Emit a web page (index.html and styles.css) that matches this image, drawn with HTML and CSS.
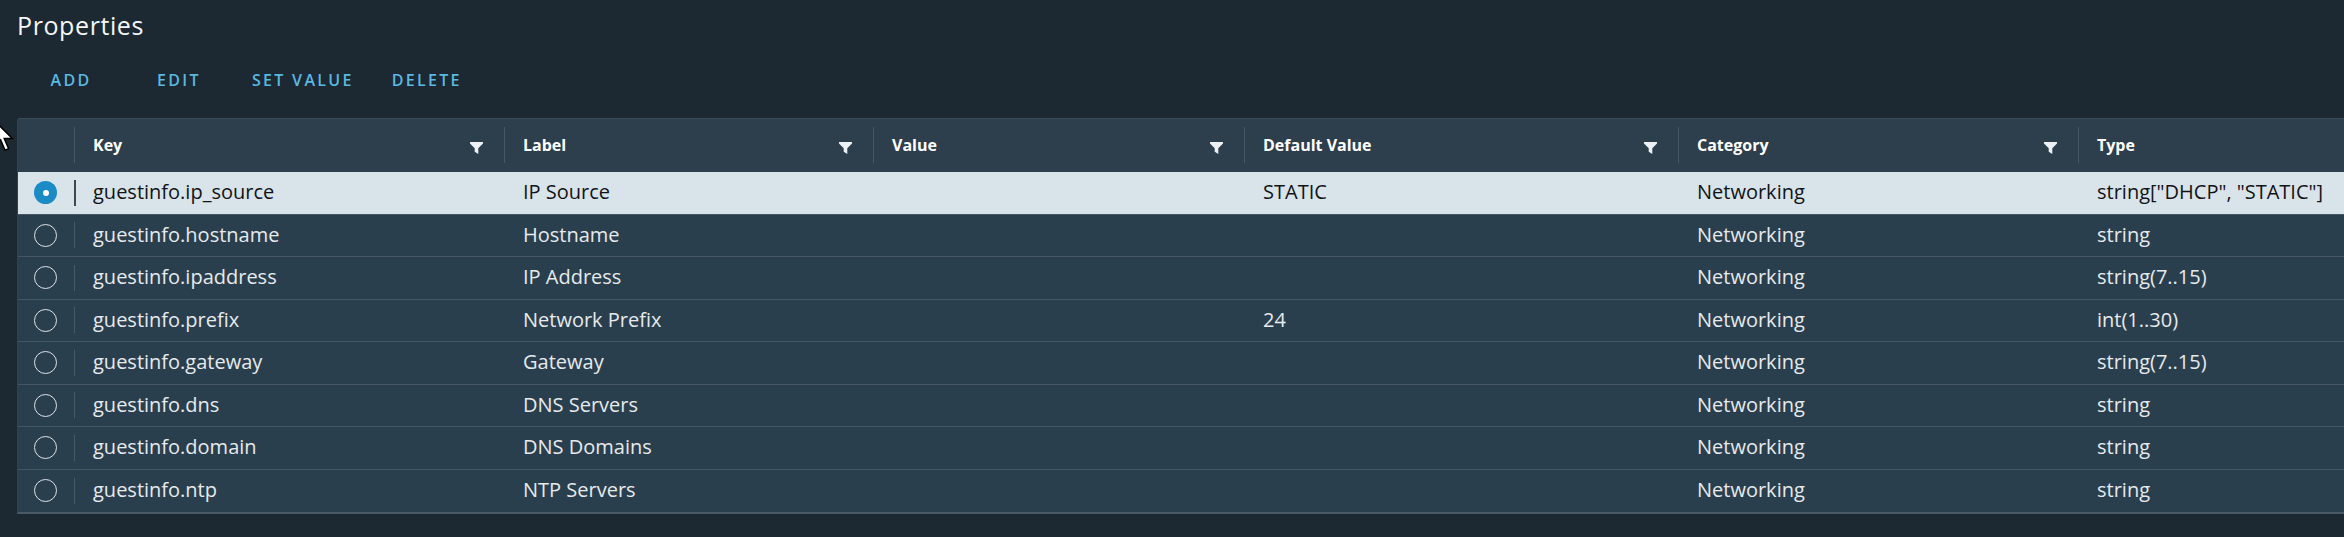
FILE: index.html
```html
<!DOCTYPE html>
<html lang="en">
<head>
  <meta charset="UTF-8">
  <title>Properties</title>
  <link rel="stylesheet" href="styles.css">
</head>
<body>
  <main class="page">
    <h1 class="title">Properties</h1>

    <div class="toolbar">
      <button class="btn-link">ADD</button>
      <button class="btn-link">EDIT</button>
      <button class="btn-link">SET VALUE</button>
      <button class="btn-link">DELETE</button>
    </div>

    <section class="datagrid">
      <div class="dg-row dg-head">
        <div class="dg-cell"></div>
        <div class="dg-cell"><span class="sep"></span><span class="col-title">Key</span><svg class="filter" viewBox="0 0 13 12"><path d="M0 0H13V1.6L8.3 6.3V12L4.7 9.8V6.3L0 1.6Z"/></svg></div>
        <div class="dg-cell"><span class="sep"></span><span class="col-title">Label</span><svg class="filter" viewBox="0 0 13 12"><path d="M0 0H13V1.6L8.3 6.3V12L4.7 9.8V6.3L0 1.6Z"/></svg></div>
        <div class="dg-cell"><span class="sep"></span><span class="col-title">Value</span><svg class="filter" viewBox="0 0 13 12"><path d="M0 0H13V1.6L8.3 6.3V12L4.7 9.8V6.3L0 1.6Z"/></svg></div>
        <div class="dg-cell"><span class="sep"></span><span class="col-title">Default Value</span><svg class="filter" viewBox="0 0 13 12"><path d="M0 0H13V1.6L8.3 6.3V12L4.7 9.8V6.3L0 1.6Z"/></svg></div>
        <div class="dg-cell"><span class="sep"></span><span class="col-title">Category</span><svg class="filter" viewBox="0 0 13 12"><path d="M0 0H13V1.6L8.3 6.3V12L4.7 9.8V6.3L0 1.6Z"/></svg></div>
        <div class="dg-cell"><span class="sep"></span><span class="col-title">Type</span></div>
      </div>

      <div class="dg-row selected">
        <div class="dg-cell radio-cell"><span class="radio checked"></span></div>
        <div class="dg-cell key-cell"><span class="sep"></span>guestinfo.ip_source</div>
        <div class="dg-cell">IP Source</div>
        <div class="dg-cell"></div>
        <div class="dg-cell">STATIC</div>
        <div class="dg-cell">Networking</div>
        <div class="dg-cell">string["DHCP", "STATIC"]</div>
      </div>
      <div class="dg-row">
        <div class="dg-cell radio-cell"><span class="radio"></span></div>
        <div class="dg-cell key-cell"><span class="sep"></span>guestinfo.hostname</div>
        <div class="dg-cell">Hostname</div>
        <div class="dg-cell"></div>
        <div class="dg-cell"></div>
        <div class="dg-cell">Networking</div>
        <div class="dg-cell">string</div>
      </div>
      <div class="dg-row">
        <div class="dg-cell radio-cell"><span class="radio"></span></div>
        <div class="dg-cell key-cell"><span class="sep"></span>guestinfo.ipaddress</div>
        <div class="dg-cell">IP Address</div>
        <div class="dg-cell"></div>
        <div class="dg-cell"></div>
        <div class="dg-cell">Networking</div>
        <div class="dg-cell">string(7..15)</div>
      </div>
      <div class="dg-row">
        <div class="dg-cell radio-cell"><span class="radio"></span></div>
        <div class="dg-cell key-cell"><span class="sep"></span>guestinfo.prefix</div>
        <div class="dg-cell">Network Prefix</div>
        <div class="dg-cell"></div>
        <div class="dg-cell">24</div>
        <div class="dg-cell">Networking</div>
        <div class="dg-cell">int(1..30)</div>
      </div>
      <div class="dg-row">
        <div class="dg-cell radio-cell"><span class="radio"></span></div>
        <div class="dg-cell key-cell"><span class="sep"></span>guestinfo.gateway</div>
        <div class="dg-cell">Gateway</div>
        <div class="dg-cell"></div>
        <div class="dg-cell"></div>
        <div class="dg-cell">Networking</div>
        <div class="dg-cell">string(7..15)</div>
      </div>
      <div class="dg-row">
        <div class="dg-cell radio-cell"><span class="radio"></span></div>
        <div class="dg-cell key-cell"><span class="sep"></span>guestinfo.dns</div>
        <div class="dg-cell">DNS Servers</div>
        <div class="dg-cell"></div>
        <div class="dg-cell"></div>
        <div class="dg-cell">Networking</div>
        <div class="dg-cell">string</div>
      </div>
      <div class="dg-row">
        <div class="dg-cell radio-cell"><span class="radio"></span></div>
        <div class="dg-cell key-cell"><span class="sep"></span>guestinfo.domain</div>
        <div class="dg-cell">DNS Domains</div>
        <div class="dg-cell"></div>
        <div class="dg-cell"></div>
        <div class="dg-cell">Networking</div>
        <div class="dg-cell">string</div>
      </div>
      <div class="dg-row">
        <div class="dg-cell radio-cell"><span class="radio"></span></div>
        <div class="dg-cell key-cell"><span class="sep"></span>guestinfo.ntp</div>
        <div class="dg-cell">NTP Servers</div>
        <div class="dg-cell"></div>
        <div class="dg-cell"></div>
        <div class="dg-cell">Networking</div>
        <div class="dg-cell">string</div>
      </div>
    </section>
  </main>

  <!-- mouse pointer resting on the left edge -->
  <svg class="cursor" viewBox="0 0 13 21"><path d="M0.5 0.5V17.5L4.5 13.5L7.5 20.5L10 19.5L7 12.5H12.5Z"/></svg>
</body>
</html>
```

FILE: styles.css
```css
/* Reset */
* {
  margin: 0;
  padding: 0;
  box-sizing: border-box;
}

/* Global */
body {
  font-family: 'Open Sans', 'Liberation Sans', sans-serif;
  background-color: #1c2832;
  color: #e6eaed;
  overflow: hidden;
  position: relative;
  height: 537px;
}

.page {
  padding-left: 17px;
}

/* Title */
.title {
  font-size: 25px;
  font-weight: 400;
  line-height: 30px;
  letter-spacing: 0.6px;
  color: #f4f6f7;
  padding-top: 10px;
}

/* Toolbar */
.toolbar {
  display: flex;
  height: 54px;
  margin-top: 13px;
}

.btn-link {
  min-width: 108px;
  padding: 0 19px;
  background: none;
  border: none;
  font-family: inherit;
  font-size: 16px;
  font-weight: 600;
  letter-spacing: 2.3px;
  color: #5bb8e0;
  cursor: pointer;
}

/* Datagrid */
.datagrid {
  margin-top: 11px;
  width: 2400px;
  background: #2a3f4d;
  border-top: 1px solid #3b4c59;
  border-left: 1px solid #334450;
  border-bottom: 2px solid #4a5966;
  border-top-left-radius: 3px;
}

.dg-row {
  display: grid;
  grid-template-columns: 56px 430px 369px 371px 434px 400px 1fr;
  height: 42.5px;
  border-bottom: 1px solid #465663;
  font-size: 20px;
}

.dg-row:last-child {
  border-bottom: none;
}

.dg-cell {
  display: flex;
  align-items: center;
  padding-left: 19px;
  padding-bottom: 2px;
  white-space: nowrap;
}

.sep {
  width: 1px;
  height: 26px;
  background: #4a5a66;
  margin-right: 18px;
  flex: none;
}

/* Header */
.dg-head {
  height: 53px;
  background: #2d3e4c;
  font-size: 16px;
  font-weight: 700;
  color: #ffffff;
  border-bottom: none;
}

.dg-head .dg-cell {
  padding-left: 0;
  padding-right: 21px;
}

.dg-head .sep {
  height: 36px;
  background: #475764;
}

.col-title {
  flex: 1;
}

.filter {
  width: 13px;
  height: 12px;
  margin-top: 6px;
  fill: #eef1f3;
}

/* Rows */
.radio-cell {
  padding-left: 16px;
  padding-bottom: 0;
}

.key-cell {
  padding-left: 0;
}

.key-cell .sep {
  margin-top: 2px;
}

.radio {
  width: 23px;
  height: 23px;
  border-radius: 50%;
  border: 1px solid #dfe4e8;
}

.radio.checked {
  border: none;
  background: #1a8bc5;
  display: flex;
  align-items: center;
  justify-content: center;
}

.radio.checked::after {
  content: "";
  width: 6px;
  height: 6px;
  border-radius: 50%;
  background: #ffffff;
}

.dg-row.selected {
  background: #d9e3ea;
  color: #111417;
}

.dg-row.selected .sep {
  width: 2px;
  margin-right: 17px;
  background: #3a4852;
}

/* Pointer */
.cursor {
  position: absolute;
  left: -6px;
  top: 120px;
  width: 19px;
  height: 31px;
  fill: #ffffff;
  stroke: #000000;
  stroke-width: 1;
}
```
